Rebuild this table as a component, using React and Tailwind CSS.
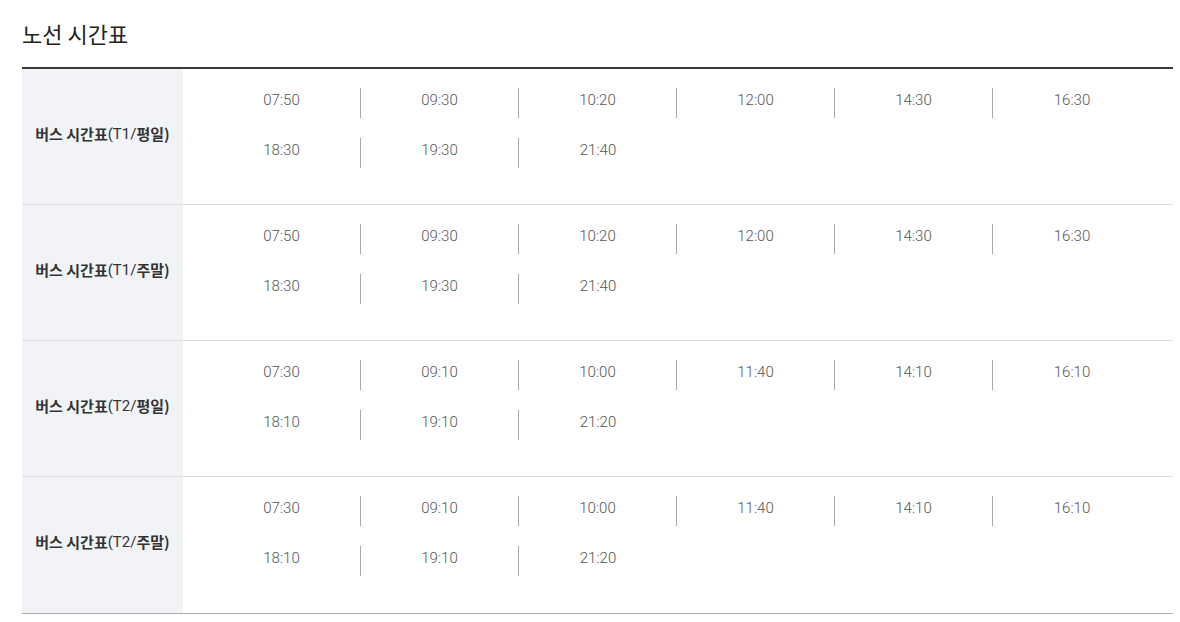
import React from "react";

const schedules = [
  { label: "T1/", day: "평일", times: ["07:50", "09:30", "10:20", "12:00", "14:30", "16:30", "18:30", "19:30", "21:40"] },
  { label: "T1/", day: "주말", times: ["07:50", "09:30", "10:20", "12:00", "14:30", "16:30", "18:30", "19:30", "21:40"] },
  { label: "T2/", day: "평일", times: ["07:30", "09:10", "10:00", "11:40", "14:10", "16:10", "18:10", "19:10", "21:20"] },
  { label: "T2/", day: "주말", times: ["07:30", "09:10", "10:00", "11:40", "14:10", "16:10", "18:10", "19:10", "21:20"] },
];

export default function App() {
  return (
    <div className="w-[1180px] h-[622px] bg-white px-[22px] pt-[18px] overflow-hidden font-['Roboto','Noto_Sans_CJK_KR',sans-serif]">
      {/* TITLE */}
      <h2 className="text-[22px] leading-[30px] text-[#222] font-normal mb-[19px] font-['Noto_Sans_CJK_KR',sans-serif]">
        노선 시간표
      </h2>

      {/* TABLE */}
      <div className="w-[1151px] border-t-2 border-[#3a3a3a] border-b border-b-[#aaaaaa]">
        {schedules.map((row, i) => (
          <div
            key={i}
            className={`flex h-[136px] ${i < schedules.length - 1 ? "border-b border-[#dddddd]" : ""}`}
          >
            <div className="w-[161px] shrink-0 bg-[#f2f3f7] flex items-center justify-center pb-[5px] text-[15px] text-[#333] font-['Noto_Sans_CJK_KR',sans-serif]">
              <span className="font-bold">버스 시간표</span>
              <span className="font-['Roboto',sans-serif]">({row.label}</span>
              <span className="font-bold">{row.day})</span>
            </div>
            <div className="flex-1 pl-[20px] pt-[19px] grid grid-cols-[repeat(6,158px)] gap-y-[20px] content-start">
              {row.times.map((t, j) => (
                <div
                  key={j}
                  className={`h-[30px] flex items-center justify-center text-[15px] text-[#555] font-light ${
                    j % 6 !== 5 && j !== row.times.length - 1 ? "border-r border-[#a9a9a9]" : ""
                  }`}
                >
                  <span className="-mt-[5px]">{t}</span>
                </div>
              ))}
            </div>
          </div>
        ))}
      </div>
    </div>
  );
}
